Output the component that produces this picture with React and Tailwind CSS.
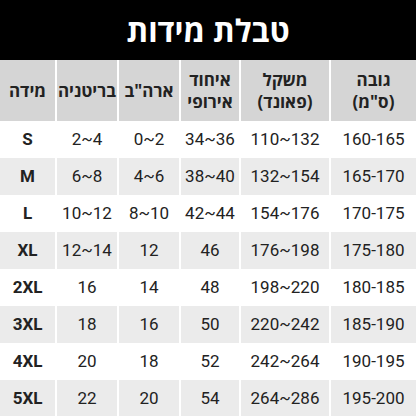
import React from 'react';

const headers = [
  ['גובה', '(ס"מ)'],
  ['משקל', '(פאונד)'],
  ['איחוד', 'אירופי'],
  ['ארה"ב'],
  ['בריטניה'],
  ['מידה'],
];

const rows = [
  ['160-165', '110~132', '34~36', '0~2', '2~4', 'S'],
  ['165-170', '132~154', '38~40', '4~6', '6~8', 'M'],
  ['170-175', '154~176', '42~44', '8~10', '10~12', 'L'],
  ['175-180', '176~198', '46', '12', '12~14', 'XL'],
  ['180-185', '198~220', '48', '14', '16', '2XL'],
  ['185-190', '220~242', '50', '16', '18', '3XL'],
  ['190-195', '242~264', '52', '18', '20', '4XL'],
  ['195-200', '264~286', '54', '20', '22', '5XL'],
];

const cols = 'grid grid-cols-[85px_88px_58px_60px_60px_55px] gap-x-[2px]';

export default function App() {
  return (
    <div dir="rtl" className="w-[416px] h-[416px] overflow-hidden bg-white font-['Open_Sans','Liberation_Sans',sans-serif]">
      <div className="h-[60px] bg-black flex items-center justify-center">
        <h1 className="text-white text-[31px] font-bold leading-none">טבלת מידות</h1>
      </div>
      <div className={`${cols} h-[61px] bg-white`}>
        {headers.map((h, i) => (
          <div key={i} className="bg-[#d5d5d5] flex flex-col items-center justify-center text-[17px] font-bold leading-[22px] text-[#222]">
            {h.map((line, j) => (
              <span key={j}>{line}</span>
            ))}
          </div>
        ))}
      </div>
      {rows.map((r, i) => (
        <div key={i} className={`${cols} h-[37px]`}>
          {r.map((v, j) => (
            <div
              key={j}
              dir="ltr"
              className={`flex items-center justify-center text-[17px] text-[#222] font-['Roboto',sans-serif] ${
                i % 2 === 1 ? 'bg-[#ebebeb]' : 'bg-white'
              } ${j === 5 ? 'font-bold' : ''}`}
            >
              {v}
            </div>
          ))}
        </div>
      ))}
    </div>
  );
}
